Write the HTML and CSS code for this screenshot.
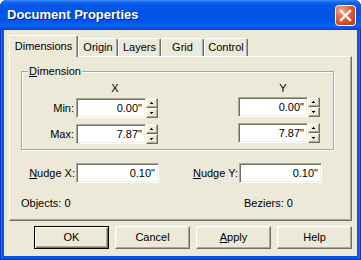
FILE: index.html
```html
<!DOCTYPE html>
<html>
<head>
<meta charset="utf-8">
<title>Document Properties</title>
<link rel="stylesheet" href="styles.css">
</head>
<body>
<div class="window">
  <div class="titlebar">
    <span class="title">Document Properties</span>
    <div class="close">
      <svg width="21" height="21" viewBox="0 0 21 21">
        <defs>
          <radialGradient id="cg" cx="30%" cy="25%" r="85%">
            <stop offset="0" stop-color="#F2A98C"/>
            <stop offset="0.45" stop-color="#E2673F"/>
            <stop offset="1" stop-color="#C0401C"/>
          </radialGradient>
        </defs>
        <rect x="0.5" y="0.5" width="20" height="20" rx="3" fill="url(#cg)" stroke="#fff"/>
        <path d="M6 6 L15 15 M15 6 L6 15" stroke="#fff" stroke-width="2.4" stroke-linecap="square"/>
      </svg>
    </div>
  </div>
  <div class="client">
    <div class="tabs">
      <div class="tab sel w-dim">Dimensions</div>
      <div class="tab w-org">Origin</div>
      <div class="tab w-lay">Layers</div>
      <div class="tab w-grid">Grid</div>
      <div class="tab w-ctl">Control</div>
    </div>
    <div class="panel">
      <fieldset class="group">
        <legend><u>D</u>imension</legend>
        <div class="cols hdr">
          <span></span>
          <span class="hx">X</span>
          <span></span>
          <span class="hy">Y</span>
        </div>
        <div class="cols rows">
          <span class="lbl">Min:</span>
          <div class="spinfield"><div class="edit">0.00"</div><div class="spin"><div class="sb"><svg width="8" height="6" viewBox="0 0 8 6" shape-rendering="crispEdges"><path d="M3 2h1v1h-1z M2 3h3v1h-3z" fill="#000"/></svg></div><div class="sb"><svg width="8" height="6" viewBox="0 0 8 6" shape-rendering="crispEdges"><path d="M2 2h3v1h-3z M3 3h1v1h-1z" fill="#000"/></svg></div></div></div>
          <span></span>
          <div class="spinfield up1"><div class="edit">0.00"</div><div class="spin"><div class="sb"><svg width="8" height="6" viewBox="0 0 8 6" shape-rendering="crispEdges"><path d="M3 2h1v1h-1z M2 3h3v1h-3z" fill="#000"/></svg></div><div class="sb"><svg width="8" height="6" viewBox="0 0 8 6" shape-rendering="crispEdges"><path d="M2 2h3v1h-3z M3 3h1v1h-1z" fill="#000"/></svg></div></div></div>
          <span class="lbl">Max:</span>
          <div class="spinfield"><div class="edit">7.87"</div><div class="spin"><div class="sb"><svg width="8" height="6" viewBox="0 0 8 6" shape-rendering="crispEdges"><path d="M3 2h1v1h-1z M2 3h3v1h-3z" fill="#000"/></svg></div><div class="sb"><svg width="8" height="6" viewBox="0 0 8 6" shape-rendering="crispEdges"><path d="M2 2h3v1h-3z M3 3h1v1h-1z" fill="#000"/></svg></div></div></div>
          <span></span>
          <div class="spinfield up1"><div class="edit">7.87"</div><div class="spin"><div class="sb"><svg width="8" height="6" viewBox="0 0 8 6" shape-rendering="crispEdges"><path d="M3 2h1v1h-1z M2 3h3v1h-3z" fill="#000"/></svg></div><div class="sb"><svg width="8" height="6" viewBox="0 0 8 6" shape-rendering="crispEdges"><path d="M2 2h3v1h-3z M3 3h1v1h-1z" fill="#000"/></svg></div></div></div>
        </div>
      </fieldset>
      <div class="nudge">
        <span class="lbl"><u>N</u>udge X:</span>
        <div class="edit wide">0.10"</div>
        <span class="lbl"><u>N</u>udge Y:</span>
        <div class="edit wide">0.10"</div>
      </div>
      <div class="info">
        <span>Objects: 0</span>
        <span>Beziers: 0</span>
      </div>
    </div>
    <div class="buttons">
      <div class="btn default">OK</div>
      <div class="btn">Cancel</div>
      <div class="btn"><u>A</u>pply</div>
      <div class="btn">Help</div>
    </div>
  </div>
</div>
</body>
</html>
```
FILE: styles.css
```css
* { box-sizing: border-box; }
html, body { margin: 0; padding: 0; }
body {
  width: 361px;
  height: 260px;
  overflow: hidden;
  background: #fff;
  font-family: "Liberation Sans", Arial, sans-serif;
  font-size: 11px;
  color: #000;
}
.window {
  width: 361px;
  height: 260px;
  display: flex;
  flex-direction: column;
  background: #0855E2;
  border-radius: 7px 7px 0 0;
  box-shadow: inset 1px 0 #0B31C8, inset -1px 0 #0B31C8, inset 0 -1px #0B31C8, inset 2px 0 #1A6CF2, inset -2px 0 #1A6CF2;
}
.titlebar {
  height: 30px;
  flex: none;
  display: flex;
  align-items: center;
  justify-content: space-between;
  padding: 0 5px 0 7px;
  border-radius: 7px 7px 0 0;
  background: linear-gradient(to bottom, #3D8EF9 0px, #1767F2 2px, #0458E8 5px, #0055E6 12px, #0157EC 22px, #0A62F6 26px, #0553E4 28px, #0341CF 30px);
}
.title {
  color: #fff;
  font-weight: bold;
  font-size: 13px;
  line-height: 16px;
  text-shadow: 1px 1px #0A1E8A;
}
.close {
  align-self: flex-start;
  margin-top: 5px;
  width: 21px;
  height: 21px;
}
.close svg { display: block; }
.client {
  flex: 1;
  margin: 0 4px 4px 4px;
  background: #ECE9D8;
  display: flex;
  flex-direction: column;
}
.tabs {
  position: relative;
  z-index: 1;
  display: flex;
  align-items: flex-end;
  height: 22px;
  margin: 5px 0 0 5px;
}
.tab {
  height: 18px;
  margin-bottom: 1px;
  border: 1px solid;
  border-bottom: none;
  border-color: #fff #716F64 #716F64 #fff;
  box-shadow: inset -1px 0 #ACA899;
  border-radius: 2px 2px 0 0;
  text-align: center;
  line-height: 16px;
  background: #ECE9D8;
  white-space: nowrap;
}
.tab.sel {
  height: 22px;
  margin-bottom: 0;
  line-height: 20px;
}
.w-dim { width: 69px; }
.w-org { width: 40px; }
.w-lay { width: 43px; }
.w-grid { width: 43px; }
.w-ctl { width: 44px; }
.panel {
  margin: -1px 0 0 5px;
  width: 343px;
  height: 165px;
  flex: none;
  border: 1px solid;
  border-color: #fff #716F64 #716F64 #fff;
  box-shadow: inset -1px -1px #ACA899;
}
.group {
  margin: 8px 0 0 11px;
  width: 313px;
  min-width: 0;
  padding: 0 0 5px 0;
  border: 1px solid #ACA899;
  box-shadow: inset 1px 1px #fff, 1px 1px #fff;
}
.group legend {
  margin-left: 6px;
  padding: 0 1px;
  line-height: 13px;
  background: #ECE9D8;
}
.cols {
  display: grid;
  grid-template-columns: 54px 82px 80px 82px;
}
.hdr {
  margin-top: 4px;
  margin-bottom: 3px;
  line-height: 13px;
}
.hx { text-align: center; padding-right: 4px; }
.hy { text-align: center; padding-left: 8px; }
.rows {
  grid-auto-rows: 20px;
  row-gap: 6px;
  align-items: center;
}
.lbl {
  text-align: right;
  padding-right: 2px;
  white-space: nowrap;
}
.spinfield {
  display: flex;
  height: 20px;
}
.spinfield.up1 { position: relative; top: -1px; }
.edit {
  width: 70px;
  height: 20px;
  background: #fff;
  border: 1px solid;
  border-color: #ACA899 #fff #fff #ACA899;
  box-shadow: inset 1px 1px #716F64, inset -1px -1px #F1EFE2;
  text-align: right;
  padding-right: 3px;
  line-height: 18px;
  white-space: nowrap;
}
.spin {
  width: 12px;
  height: 20px;
  display: flex;
  flex-direction: column;
}
.sb {
  height: 10px;
  background: #ECE9D8;
  border: 1px solid;
  border-color: #F1EFE2 #716F64 #716F64 #F1EFE2;
  box-shadow: inset -1px -1px #ACA899, inset 1px 1px #fff;
  display: flex;
  align-items: center;
  justify-content: center;
}
.sb svg { display: block; }
.nudge {
  display: grid;
  grid-template-columns: 66px 83px 80px 83px;
  align-items: center;
  height: 20px;
  margin-top: 13px;
}
.nudge .lbl { padding-right: 1px; }
.edit.wide { width: 83px; }
.info {
  display: grid;
  grid-template-columns: 223px auto;
  margin: 14px 0 0 11px;
  line-height: 13px;
}
.buttons {
  display: flex;
  gap: 6px;
  margin: 5px 0 0 30px;
}
.btn {
  width: 75px;
  height: 23px;
  background: #ECE9D8;
  border: 1px solid;
  border-color: #fff #716F64 #716F64 #fff;
  box-shadow: inset -1px -1px #ACA899, inset 1px 1px #F1EFE2;
  text-align: center;
  line-height: 21px;
}
.btn.default {
  border-color: #000;
  box-shadow: inset 1px 1px #fff, inset -1px -1px #716F64, inset -2px -2px #ACA899;
}
```
